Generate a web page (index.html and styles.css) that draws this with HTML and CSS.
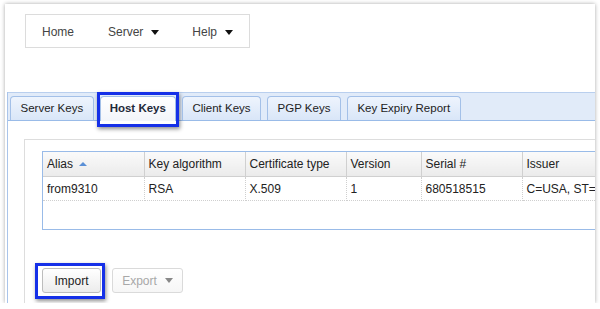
FILE: index.html
```html
<!DOCTYPE html>
<html lang="en">
<head>
    <meta charset="UTF-8">
    <title>Key Manager</title>
    <link rel="stylesheet" href="styles.css">
</head>
<body>
    <div class="frame">
        <div class="menu">
            <span class="menu-item">Home</span>
            <span class="menu-item">Server <span class="caret"></span></span>
            <span class="menu-item">Help <span class="caret"></span></span>
        </div>

        <div class="tabpanel">
            <div class="tabstrip">
                <div class="tab">Server Keys</div>
                <div class="tab active marked">Host Keys</div>
                <div class="tab">Client Keys</div>
                <div class="tab">PGP Keys</div>
                <div class="tab">Key Expiry Report</div>
            </div>
            <div class="tabbody">
                <div class="inner">
                    <div class="grid">
                        <table>
                            <colgroup>
                                <col style="width: 101px">
                                <col style="width: 101px">
                                <col style="width: 101px">
                                <col style="width: 75px">
                                <col style="width: 101px">
                                <col style="width: 200px">
                            </colgroup>
                            <thead>
                                <tr>
                                    <th>Alias <span class="sort"></span></th>
                                    <th>Key algorithm</th>
                                    <th>Certificate type</th>
                                    <th>Version</th>
                                    <th>Serial #</th>
                                    <th>Issuer</th>
                                </tr>
                            </thead>
                            <tbody>
                                <tr>
                                    <td>from9310</td>
                                    <td>RSA</td>
                                    <td>X.509</td>
                                    <td>1</td>
                                    <td>680518515</td>
                                    <td>C=USA, ST=Florida, L=Miami</td>
                                </tr>
                            </tbody>
                        </table>
                    </div>
                    <div class="buttons">
                        <button class="btn marked">Import</button>
                        <button class="btn disabled">Export <span class="caret gray"></span></button>
                    </div>
                </div>
            </div>
        </div>
    </div>
</body>
</html>
```

FILE: styles.css
```css
body { margin: 0; background: #fff; font-family: "Liberation Sans", Arial, sans-serif; font-size: 12px; color: #222; }
.frame { margin: 4px 0 0 5px; width: 590px; height: 299px; background: #fff; box-shadow: 0 0 4px rgba(0, 0, 0, 0.35); overflow: hidden; }

.menu { margin: 10px 0 0 20px; width: 225px; height: 34px; padding-top: 2px; box-sizing: border-box; border: 1px solid #dcdcdc; display: flex; align-items: center; color: #444; }
.menu-item { display: flex; align-items: center; }
.menu-item:nth-child(1) { margin-left: 16px; }
.menu-item:nth-child(2) { margin-left: 34px; }
.menu-item:nth-child(3) { margin-left: 33px; }
.caret { display: inline-block; width: 0; height: 0; border-left: 4px solid transparent; border-right: 4px solid transparent; border-top: 5px solid #111; margin-left: 8px; }
.caret.gray { border-top-color: #888; margin-left: 8px; }

.tabpanel { margin: 44px 0 0 2px; border-left: 1px solid #a9c4ea; width: 700px; height: 300px; }
.tabstrip { display: flex; gap: 6px; padding: 3px 0 0 2px; height: 24px; background: #e1ebf9; border-top: 1px solid #b9cfee; border-bottom: 1px solid #99bbe8; }
.tab { position: relative; height: 23px; line-height: 22px; padding: 0 9.5px; font-size: 11.5px; border: 1px solid #a3c0e8; border-bottom: none; border-radius: 4px 4px 0 0; background: linear-gradient(#eef4fd, #d9e6f8); color: #222; white-space: nowrap; }
.tab.active { background: linear-gradient(#fff, #f2f5fa); font-weight: bold; height: 24px; color: #1e2a3a; padding: 0 9px; }
.tab.marked::after { content: ""; position: absolute; inset: -5px -4px -6px -4px; border: 3px solid #1530e8; box-shadow: 1px 2px 4px rgba(0, 0, 0, 0.45); pointer-events: none; }

.tabbody { padding: 18px 0 0 16px; }
.inner { border: 1px solid #dddddd; padding: 11px 0 0 17px; height: 200px; }

.grid { border: 1px solid #99bbe8; height: 77px; width: 640px; }
table { border-collapse: collapse; table-layout: fixed; width: 679px; }
th { height: 24px; padding: 0 4px; text-align: left; font-weight: normal; background: linear-gradient(#fafafa, #ebebeb); border-right: 1px solid #d0d0d0; border-bottom: 1px solid #d0d0d0; white-space: nowrap; }
td { height: 23px; padding: 0 4px; border-right: 1px dotted #cfcfcf; border-bottom: 1px dotted #cfcfcf; white-space: nowrap; overflow: hidden; }
.sort { display: inline-block; width: 0; height: 0; border-left: 4px solid transparent; border-right: 4px solid transparent; border-bottom: 4px solid #5a8fd6; margin-left: 3px; vertical-align: 2px; }

.buttons { display: flex; gap: 11px; margin-top: 38px; }
.btn { position: relative; height: 25px; padding: 0; font-family: inherit; font-size: 12px; color: #222; background: linear-gradient(#fff, #ececec); border: 1px solid #bdbdbd; border-radius: 3px; display: flex; align-items: center; justify-content: center; }
.btn.marked { width: 59px; }
.btn.disabled { width: 71px; color: #a8a8a8; border-color: #dadada; background: linear-gradient(#fff, #f6f6f6); }
.btn.marked::after { content: ""; position: absolute; inset: -6px -5px -7px -8px; border: 3px solid #1530e8; box-shadow: 1px 2px 4px rgba(0, 0, 0, 0.45); pointer-events: none; }
```
